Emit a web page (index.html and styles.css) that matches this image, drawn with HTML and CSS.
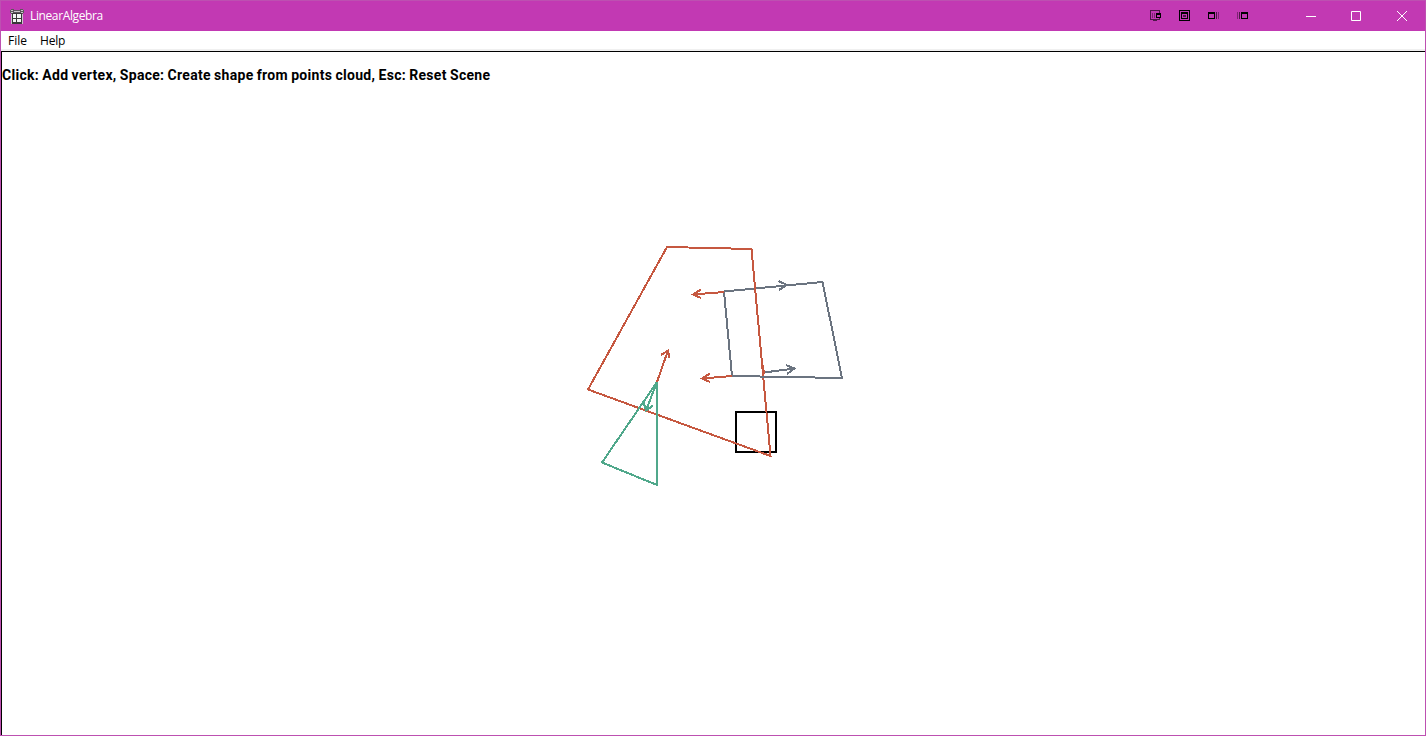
FILE: index.html
```html
<!DOCTYPE html>
<html lang="en">
<head>
<meta charset="utf-8">
<title>LinearAlgebra</title>
<link rel="stylesheet" href="styles.css">
</head>
<body>
<div class="window">
  <header class="titlebar">
    <svg class="app-icon" width="16" height="17" viewBox="0 0 16 17" shape-rendering="crispEdges">
      <path fill="#5d555c" d="M2 1h3v1h6V1h3v1h1v3h-1v11H2V5H1V2h1z"/>
      <path fill="#c9c5c9" d="M2 2h2v1H2zM12 2h2v1h-2zM5 3h6v1H5zM2 4h2v1H2zM12 4h2v1h-2zM2 6h1v10H2zM13 6h1v10h-1z"/>
      <path fill="#3a383a" d="M3 5h10v11H3z"/>
      <path fill="#f4f4f4" d="M4 6h3v4H4zM8 6h4v4H8zM4 11h3v3H4zM8 11h4v3H8z"/>
    </svg>
    <span class="title">LinearAlgebra</span>
    <div class="tools">
      <svg width="12" height="12" viewBox="0 0 12 12" shape-rendering="crispEdges">
        <path fill="#4e1648" d="M0 0h10v1H0zM0 1h1v9H0zM9 1h1v2H9zM1 9h9v1H1zM9 8h1v1H9zM3 10h4v1H3z"/>
        <path fill="#7d2473" d="M2 3h1v5H2zM4 3h1v5H4z"/>
        <path d="M6 3h5v5H6z"/><path fill="#c239b3" d="M7 5h3v2H7z"/>
      </svg>
      <svg width="12" height="12" viewBox="0 0 12 12" shape-rendering="crispEdges">
        <path fill="none" stroke="#000" d="M.5.5h10v10H.5zM2.500 2.500h6v6h-6z"/>
        <path d="M2 2h7v2H2z"/><path fill="#4e1648" d="M4 5h3v2H4z"/>
      </svg>
      <svg width="12" height="12" viewBox="0 0 12 12" shape-rendering="crispEdges">
        <path fill-rule="evenodd" d="M0 2h7v7H0zM1 4h5v4H1z"/>
        <path fill="#4e1648" d="M8 2h1v7H8z"/><path fill="#7d2473" d="M10 2h1v7h-1z"/>
      </svg>
      <svg width="12" height="12" viewBox="0 0 12 12" shape-rendering="crispEdges">
        <path fill-rule="evenodd" d="M4 2h7v7H4zM5 4h5v4H5z"/>
        <path fill="#7d2473" d="M0 2h1v7H0z"/><path fill="#4e1648" d="M2 2h1v7H2z"/>
      </svg>
    </div>
    <div class="controls">
      <svg class="minimize" width="10" height="10" viewBox="0 0 10 10"><path d="M0 5.500h10"/></svg>
      <svg width="10" height="10" viewBox="0 0 10 10"><path d="M.5.5h9v9h-9z"/></svg>
      <svg width="10" height="10" viewBox="0 0 10 10"><path d="M0 0l10 10M10 0L0 10"/></svg>
    </div>
  </header>
  <nav class="menubar"><span class="menu-file">File</span><span class="menu-help">Help</span></nav>
  <main class="client">
    <p class="hint">Click: Add vertex, Space: Create shape from points cloud, Esc: Reset Scene</p>
    <svg class="scene" width="260" height="250" viewBox="585 240 260 250" shape-rendering="crispEdges">
      <path class="box" d="M736 412h40v40h-40z"/>
      <path class="red" d="M667 247L751.500 249L770.500 456L588 389.500Z"/>
      <path class="gray" d="M724 291.500L822.500 282L842 378L732 376Z"/>
      <path class="green" d="M657 382V485L602 462.500Z"/>
      <path class="red" d="M724 292L693 294.500M701 289.500L693 294.500L701 298M732 376L702 378.500M710 373.500L702 378.500L710 382M657 382L668 350.500M661 355L668 350.500L669.500 358"/>
      <path class="green" d="M657 382L646 410.500M643.500 402L646 410.500L653 405.500"/>
      <path class="gray" d="M778.500 281L787 285L779 290M764 372.500L794.500 368.500M786 365L794.500 368.500L787 374"/>
      <path class="red" d="M754.500 282L755.500 292M763 365L764 374"/>
    </svg>
  </main>
</div>
</body>
</html>
```
FILE: styles.css
```css
body {
  margin: 0;
  background: #fff;
}

.window {
  box-sizing: border-box;
  width: 1426px;
  height: 736px;
  display: flex;
  flex-direction: column;
  border: 1px solid #bd50b1;
  overflow: hidden;
}

.titlebar {
  box-sizing: border-box;
  height: 30px;
  flex: none;
  display: flex;
  align-items: center;
  padding: 0 17px 0 8px;
  background: #c239b3;
  color: #fff;
  font: 12px/28px "Open Sans", "Noto Sans", sans-serif;
}

.app-icon {
  display: block;
  margin-right: 5px;
}

.title {
  width: 90px;
  white-space: nowrap;
  letter-spacing: -0.38px;
}

.tools {
  display: flex;
  gap: 17px;
  margin-left: auto;
  margin-right: 57px;
}

.tools svg,
.controls svg {
  display: block;
}

.controls {
  display: flex;
  gap: 36px;
  padding-right: 1px;
}

.controls .minimize {
  margin-right: -1px;
}

.controls path {
  fill: none;
  stroke: #fff;
}

.menubar {
  box-sizing: border-box;
  height: 20px;
  flex: none;
  display: flex;
  gap: 13px;
  padding-left: 7px;
  border-bottom: 2px solid #f0f0f0;
  color: #000;
  font: 12px/20px "Open Sans", "Noto Sans", sans-serif;
}

.menu-file {
  width: 19px;
}

.menu-help {
  letter-spacing: -0.2px;
}

.client {
  flex: 1;
  border-top: 1px solid #000;
  border-left: 1px solid #000;
}

.hint {
  margin: 14px 0 0;
  height: 18px;
  color: #000;
  font: bold 14px/18px Roboto, sans-serif;
  letter-spacing: 0.29px;
  word-spacing: -0.5px;
  white-space: nowrap;
}

.scene {
  display: block;
  margin: 156px 0 0 583px;
}

.scene path {
  fill: none;
  stroke-width: 2;
}

.scene .box {
  stroke: #000;
}

.scene .red {
  stroke: #c65840;
}

.scene .gray {
  stroke: #6b7480;
}

.scene .green {
  stroke: #50a88b;
}
```
